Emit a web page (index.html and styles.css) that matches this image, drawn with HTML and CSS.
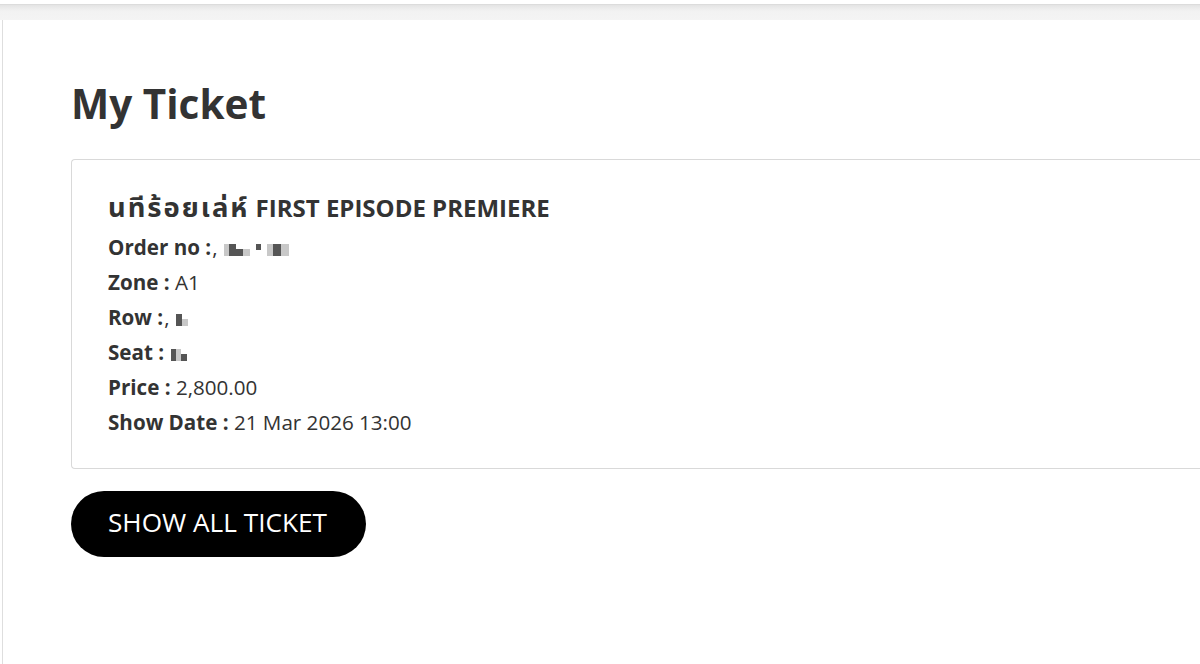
FILE: index.html
```html
<!DOCTYPE html>
<html lang="th">
<head>
<meta charset="utf-8">
<title>My Ticket</title>
<link rel="stylesheet" href="styles.css">
</head>
<body>
<div class="topbar"></div>
<main class="page">
  <h1 class="page-title">My Ticket</h1>
  <section class="ticket-card">
    <h2 class="ticket-name"><span class="thai">นทีร้อยเล่ห์</span> FIRST EPISODE PREMIERE</h2>
    <p class="ticket-line"><span class="label">Order no :</span><span class="blur">,<i class="gap"></i><i class="px w5 l"></i><i class="px w7 d"></i><i class="px w7 d sm2"></i><i class="px w7 l sm2"></i><i class="gap"></i><i class="px w5 d sm"></i><i class="gap"></i><i class="px w6 l"></i><i class="px w8 d"></i><i class="px w8 l"></i></span></p>
    <p class="ticket-line"><span class="label">Zone :</span> A1</p>
    <p class="ticket-line"><span class="label">Row :</span><span class="blur">,<i class="gap"></i><i class="px w6 d"></i><i class="px w6 l sm2"></i></span></p>
    <p class="ticket-line"><span class="label">Seat :</span><span class="blur"><i class="gap"></i><i class="px w5 d"></i><i class="px w5 l"></i><i class="px w6 d sm2"></i></span></p>
    <p class="ticket-line"><span class="label">Price :</span> 2,800.00</p>
    <p class="ticket-line"><span class="label">Show Date :</span> 21 Mar 2026 13:00</p>
  </section>
  <button class="btn-all" type="button">SHOW ALL TICKET</button>
</main>
</body>
</html>
```

FILE: styles.css
```css
* { box-sizing: border-box; }
html, body { margin: 0; padding: 0; background: #fff; }
body {
  font-family: "Open Sans", "Noto Sans", "Noto Sans Thai", sans-serif;
  color: #333;
  overflow: hidden;
  height: 664px;
}
.topbar {
  margin-top: 4px;
  height: 16px;
  background: linear-gradient(#e4e4e4, #f2f2f2 40%, #f4f4f4);
  border-top: 1px solid #dcdcdc;
}
.page {
  margin-left: 2px;
  border-left: 1px solid #dedede;
  padding: 60px 0 100px 68px;
  height: 644px;
}
.page-title {
  margin: 0 0 30px;
  font-size: 40.5px;
  font-weight: 700;
  line-height: 1.2;
  color: #333;
}
.ticket-card {
  border: 1px solid #d9d9d9;
  border-right: none;
  border-radius: 4px 0 0 4px;
  padding: 30px 36px 28px;
  margin-right: -20px;
}
.ticket-name {
  margin: 0 0 4px;
  font-size: 24px;
  font-weight: 700;
  line-height: 36px;
  color: #333;
}
.thai {
  font-size: 1.14em;
  letter-spacing: 2px;
  line-height: 1;
}
.ticket-line {
  margin: 0;
  font-size: 20.6px;
  line-height: 35px;
  color: #333;
}
.label { font-weight: 700; }
.blur { margin-left: 1px; }
.gap { display: inline-block; width: 6px; }
.px {
  display: inline-block;
  height: 12px;
  background: #999;
  vertical-align: -1px;
}
.px.d { background: #555; }
.px.l { background: #c8c8c8; }
.px.sm { height: 6px; vertical-align: 5px; }
.px.sm2 { height: 7px; vertical-align: -1px; }
.w5 { width: 5px; }
.w6 { width: 6px; }
.w7 { width: 7px; }
.w8 { width: 8px; }
.btn-all {
  margin-top: 22px;
  height: 66px;
  padding: 0 39px 3px 37px;
  border: none;
  border-radius: 33px;
  background: #000;
  color: #fff;
  font-family: "Open Sans", "Noto Sans", sans-serif;
  font-size: 26.2px;
  font-weight: 400;
  cursor: pointer;
}
```
